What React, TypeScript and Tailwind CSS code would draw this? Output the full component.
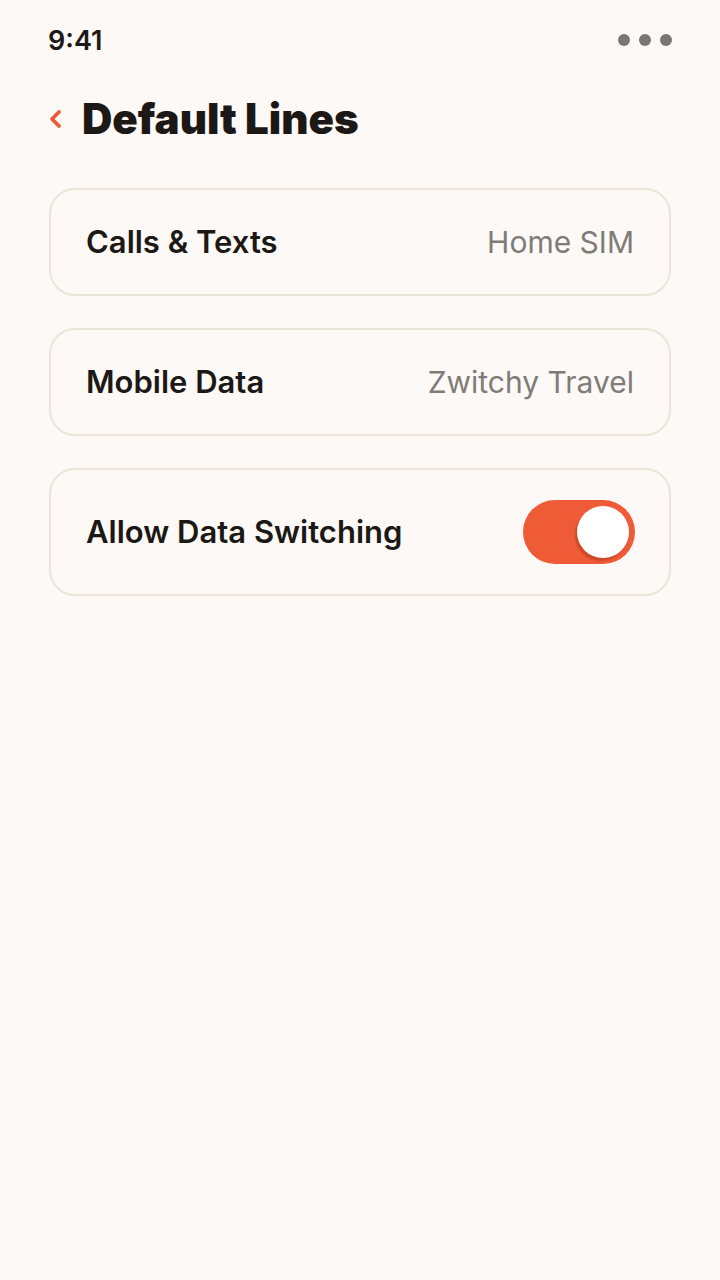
export default function App() {
  return (
    <div
      className="min-h-[1280px] w-[720px] bg-[#fdf9f6] text-[#1c1815]"
      style={{ fontFamily: 'Inter, "Noto Sans", sans-serif' }}
    >
      {/* Status bar */}
      <div className="flex items-center justify-between pl-[48px] pr-[48px] pt-[24px] h-[56px]">
        <span className="text-[27px] font-semibold leading-none">9:41</span>
        <div className="flex items-center gap-[9px]">
          <span className="h-[12px] w-[12px] rounded-full bg-[#7a7773]" />
          <span className="h-[12px] w-[12px] rounded-full bg-[#7a7773]" />
          <span className="h-[12px] w-[12px] rounded-full bg-[#7a7773]" />
        </div>
      </div>

      {/* Header */}
      <div className="flex items-center gap-[20px] pl-[48px] mt-[36px] h-[54px]">
        <svg width="14" height="22" viewBox="0 0 14 22" fill="none">
          <path d="M11 4 L4 11 L11 18" stroke="#ee5a36" strokeWidth="3.8" strokeLinecap="round" strokeLinejoin="round" />
        </svg>
        <h1 className="text-[42px] font-black leading-none">Default Lines</h1>
      </div>

      {/* Cards */}
      <div className="flex flex-col gap-[32px] px-[49px] mt-[42px]">
        <div className="flex items-center justify-between h-[108px] rounded-[26px] border-2 border-[#ebe5d8] px-[35px]">
          <span className="text-[31px] font-semibold">Calls &amp; Texts</span>
          <span className="text-[30px] text-[#7f7c78]">Home SIM</span>
        </div>
        <div className="flex items-center justify-between h-[108px] rounded-[26px] border-2 border-[#ebe5d8] px-[35px]">
          <span className="text-[31px] font-semibold">Mobile Data</span>
          <span className="text-[30px] text-[#7f7c78]">Zwitchy Travel</span>
        </div>
        <div className="flex items-center justify-between h-[128px] rounded-[26px] border-2 border-[#ebe5d8] pl-[35px] pr-[34px]">
          <span className="text-[31px] font-semibold">Allow Data Switching</span>
          <div className="flex items-center justify-end h-[64px] w-[112px] rounded-full bg-[#ef5b36] pr-[6px]">
            <span className="h-[52px] w-[52px] rounded-full bg-white shadow-[-2px_3px_2px_rgba(160,50,25,0.45)]" />
          </div>
        </div>
      </div>
    </div>
  );
}
